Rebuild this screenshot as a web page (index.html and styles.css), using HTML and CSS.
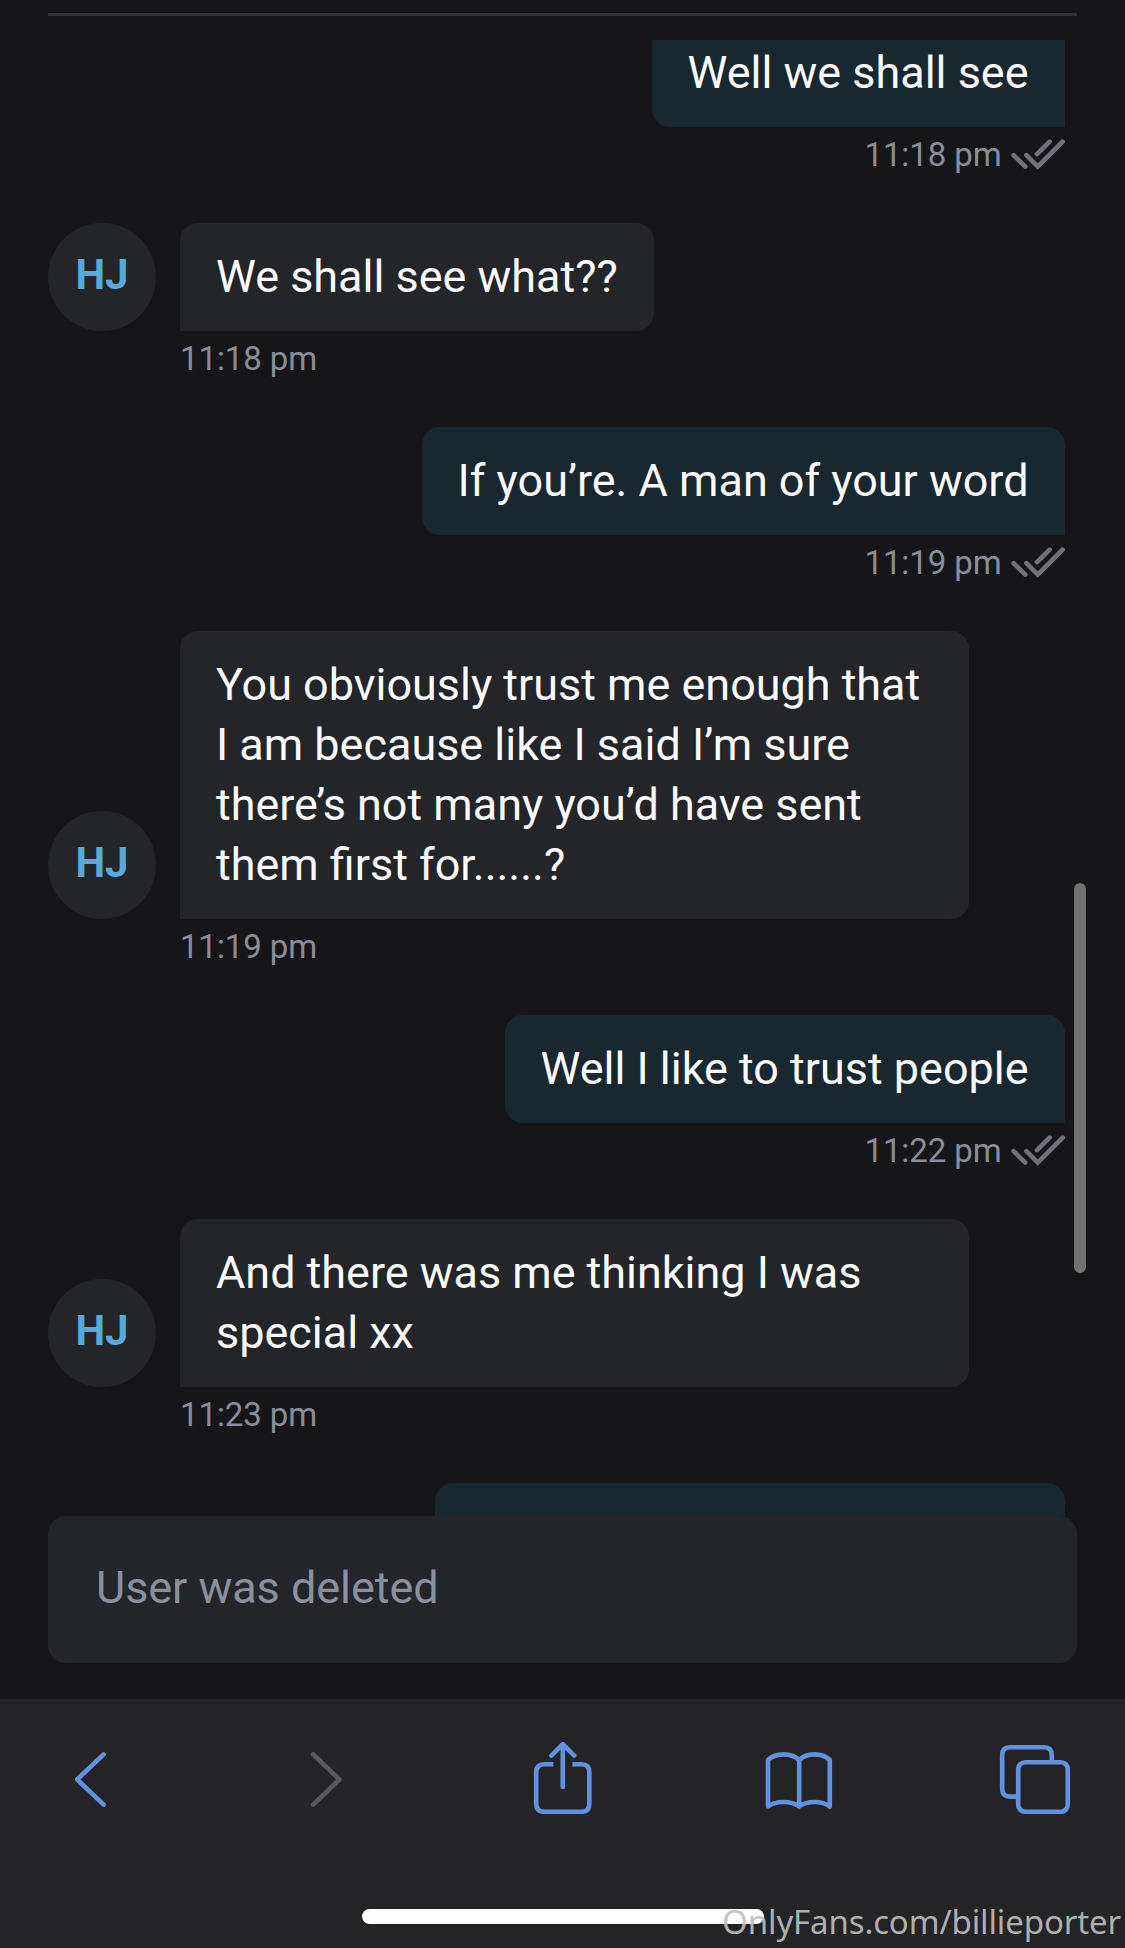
FILE: index.html
```html
<!DOCTYPE html>
<html lang="en">
<head>
<meta charset="utf-8">
<title>Messages</title>
<link rel="stylesheet" href="styles.css">
</head>
<body>
<svg class="defs" aria-hidden="true">
  <symbol id="read" viewBox="0 0 54 31">
    <path d="M2.6 16.2 14.2 27.6M15.4 16.2 26.7 27.6 51.6 2.7M26 15.2 38.6 2.7"/>
  </symbol>
</svg>
<div class="screen">
  <div class="divider"></div>
  <main class="chat">
    <section class="message sent clipped">
      <p class="bubble">Well we shall see</p>
      <div class="meta"><time>11:18 pm</time><svg class="read"><use href="#read"/></svg></div>
    </section>
    <section class="message received">
      <div class="avatar">HJ</div>
      <p class="bubble">We shall see what??</p>
      <div class="meta"><time>11:18 pm</time></div>
    </section>
    <section class="message sent">
      <p class="bubble">If you’re. A man of your word</p>
      <div class="meta"><time>11:19 pm</time><svg class="read"><use href="#read"/></svg></div>
    </section>
    <section class="message received">
      <div class="avatar">HJ</div>
      <p class="bubble wide">You obviously trust me enough that<br>I am because like I said I’m sure<br>there’s not many you’d have sent<br>them first for......?</p>
      <div class="meta"><time>11:19 pm</time></div>
    </section>
    <section class="message sent">
      <p class="bubble">Well I like to trust people</p>
      <div class="meta"><time>11:22 pm</time><svg class="read"><use href="#read"/></svg></div>
    </section>
    <section class="message received">
      <div class="avatar">HJ</div>
      <p class="bubble wide">And there was me thinking I was<br>special xx</p>
      <div class="meta"><time>11:23 pm</time></div>
    </section>
    <section class="message sent">
      <div class="bubble upcoming"></div>
    </section>
    <div class="scrollbar"></div>
  </main>
  <div class="composer">User was deleted</div>
  <footer class="toolbar">
    <nav class="actions">
      <svg viewBox="54 1742 72 72"><path d="M103.6 1754.4 77.2 1779.5 103.6 1804.6"/></svg>
      <svg class="disabled" viewBox="290 1742 72 72"><path d="M313.2 1754.4 339.4 1779.5 313.2 1804.6"/></svg>
      <svg viewBox="526.6 1742 72 72"><path class="flat" d="M553 1764.2H544Q535.8 1764.2 535.8 1772V1804Q535.8 1811.8 544 1811.8H581Q588.9 1811.8 588.9 1804V1772Q588.9 1764.2 581 1764.2H572"/><path d="M562.4 1787V1744.4M551 1755.6 562.4 1744.2 573.8 1755.6"/></svg>
      <svg viewBox="763 1742 72 72"><path d="M799.2 1760C791 1752.5 776 1752.5 768 1760V1806.5C776 1800.5 791 1800.5 799.2 1806.5C807 1800.5 822 1800.5 829.8 1806.5V1760C822 1752.5 807 1752.5 799.2 1760V1806.5"/></svg>
      <svg viewBox="999 1742 72 72"><path class="flat" d="M1016 1796.6H1010Q1002.2 1796.6 1002.2 1789V1755Q1002.2 1747.2 1010 1747.2H1044Q1051.8 1747.2 1051.8 1755V1761"/><rect x="1018.2" y="1762.2" width="49.6" height="49.6" rx="7"/></svg>
    </nav>
    <div class="home"></div>
    <div class="watermark">OnlyFans.com/billieporter</div>
  </footer>
</div>
</body>
</html>
```
FILE: styles.css
```css
* { box-sizing: border-box; }
body {
  margin: 0;
  background: #161618;
  font-family: Roboto, "Liberation Sans", sans-serif;
}
p { margin: 0; }
.defs { display: none; }
.screen {
  width: 1125px;
  height: 1948px;
  overflow: hidden;
  display: flex;
  flex-direction: column;
}
.divider {
  height: 3px;
  margin: 13px 48px 24px;
  background: #303035;
  flex: none;
}
.chat {
  position: relative;
  height: 1476px;
  flex: none;
  overflow: hidden;
  padding: 0 60px 0 48px;
}
.message { display: flex; margin-bottom: 96px; position: relative; }
.clipped { margin-top: -21px; }
.sent { justify-content: flex-end; }
.received { align-items: flex-end; gap: 24px; }
.bubble {
  padding: 24px 36px;
  max-width: 789px;
  font-size: 44.94px;
  line-height: 60px;
  color: #fafafc;
  white-space: nowrap;
}
.sent .bubble {
  padding-right: 36.5px;
  padding-left: 35.5px;
  background: #19282f;
  border-radius: 18px 18px 0 18px;
}
.received .bubble { background: #242528; border-radius: 18px 18px 18px 0; }
.wide { width: 789px; }
.upcoming { width: 630px; height: 108px; }
.avatar {
  width: 108px;
  height: 108px;
  border-radius: 50%;
  background: #242528;
  color: #5aa9dc;
  font-size: 42px;
  font-weight: 700;
  line-height: 104px;
  text-align: center;
  flex: none;
}
.meta {
  position: absolute;
  top: 100%;
  display: flex;
  align-items: center;
  gap: 9.5px;
  height: 55px;
  font-size: 33px;
  letter-spacing: -.1px;
  color: #898d99;
}
.sent .meta { right: 0; }
.received .meta { left: 132px; }
.read {
  width: 54px;
  height: 31px;
  fill: none;
  stroke: #6f727b;
  stroke-width: 4.6;
  stroke-linecap: round;
}
.scrollbar {
  position: absolute;
  top: 843px;
  right: 39px;
  width: 12px;
  height: 390px;
  border-radius: 6px;
  background: #727272;
}
.composer {
  flex: none;
  height: 147px;
  margin: 0 48px 36px;
  padding: 0 48px;
  border-radius: 18px;
  background: #242528;
  color: #8b909e;
  font-size: 45px;
  line-height: 143px;
  letter-spacing: -.05px;
}
.toolbar {
  position: relative;
  flex: 1;
  background: #242426;
  padding: 43px 54px 0;
}
.actions { display: flex; justify-content: space-between; }
.actions svg {
  width: 72px;
  height: 72px;
  fill: none;
  stroke: #6291e2;
  stroke-width: 4.6;
  stroke-linecap: round;
  stroke-linejoin: round;
}
.actions .disabled { stroke: #59595b; }
.actions .flat { stroke-linecap: butt; }
.home {
  width: 402px;
  height: 15px;
  margin: 95px auto 0;
  border-radius: 8px;
  background: #fff;
}
.watermark {
  position: absolute;
  right: 4px;
  bottom: 4px;
  font: 33px/45px "Noto Sans", sans-serif;
  letter-spacing: -.13px;
  color: rgba(190, 190, 190, .93);
}
```
